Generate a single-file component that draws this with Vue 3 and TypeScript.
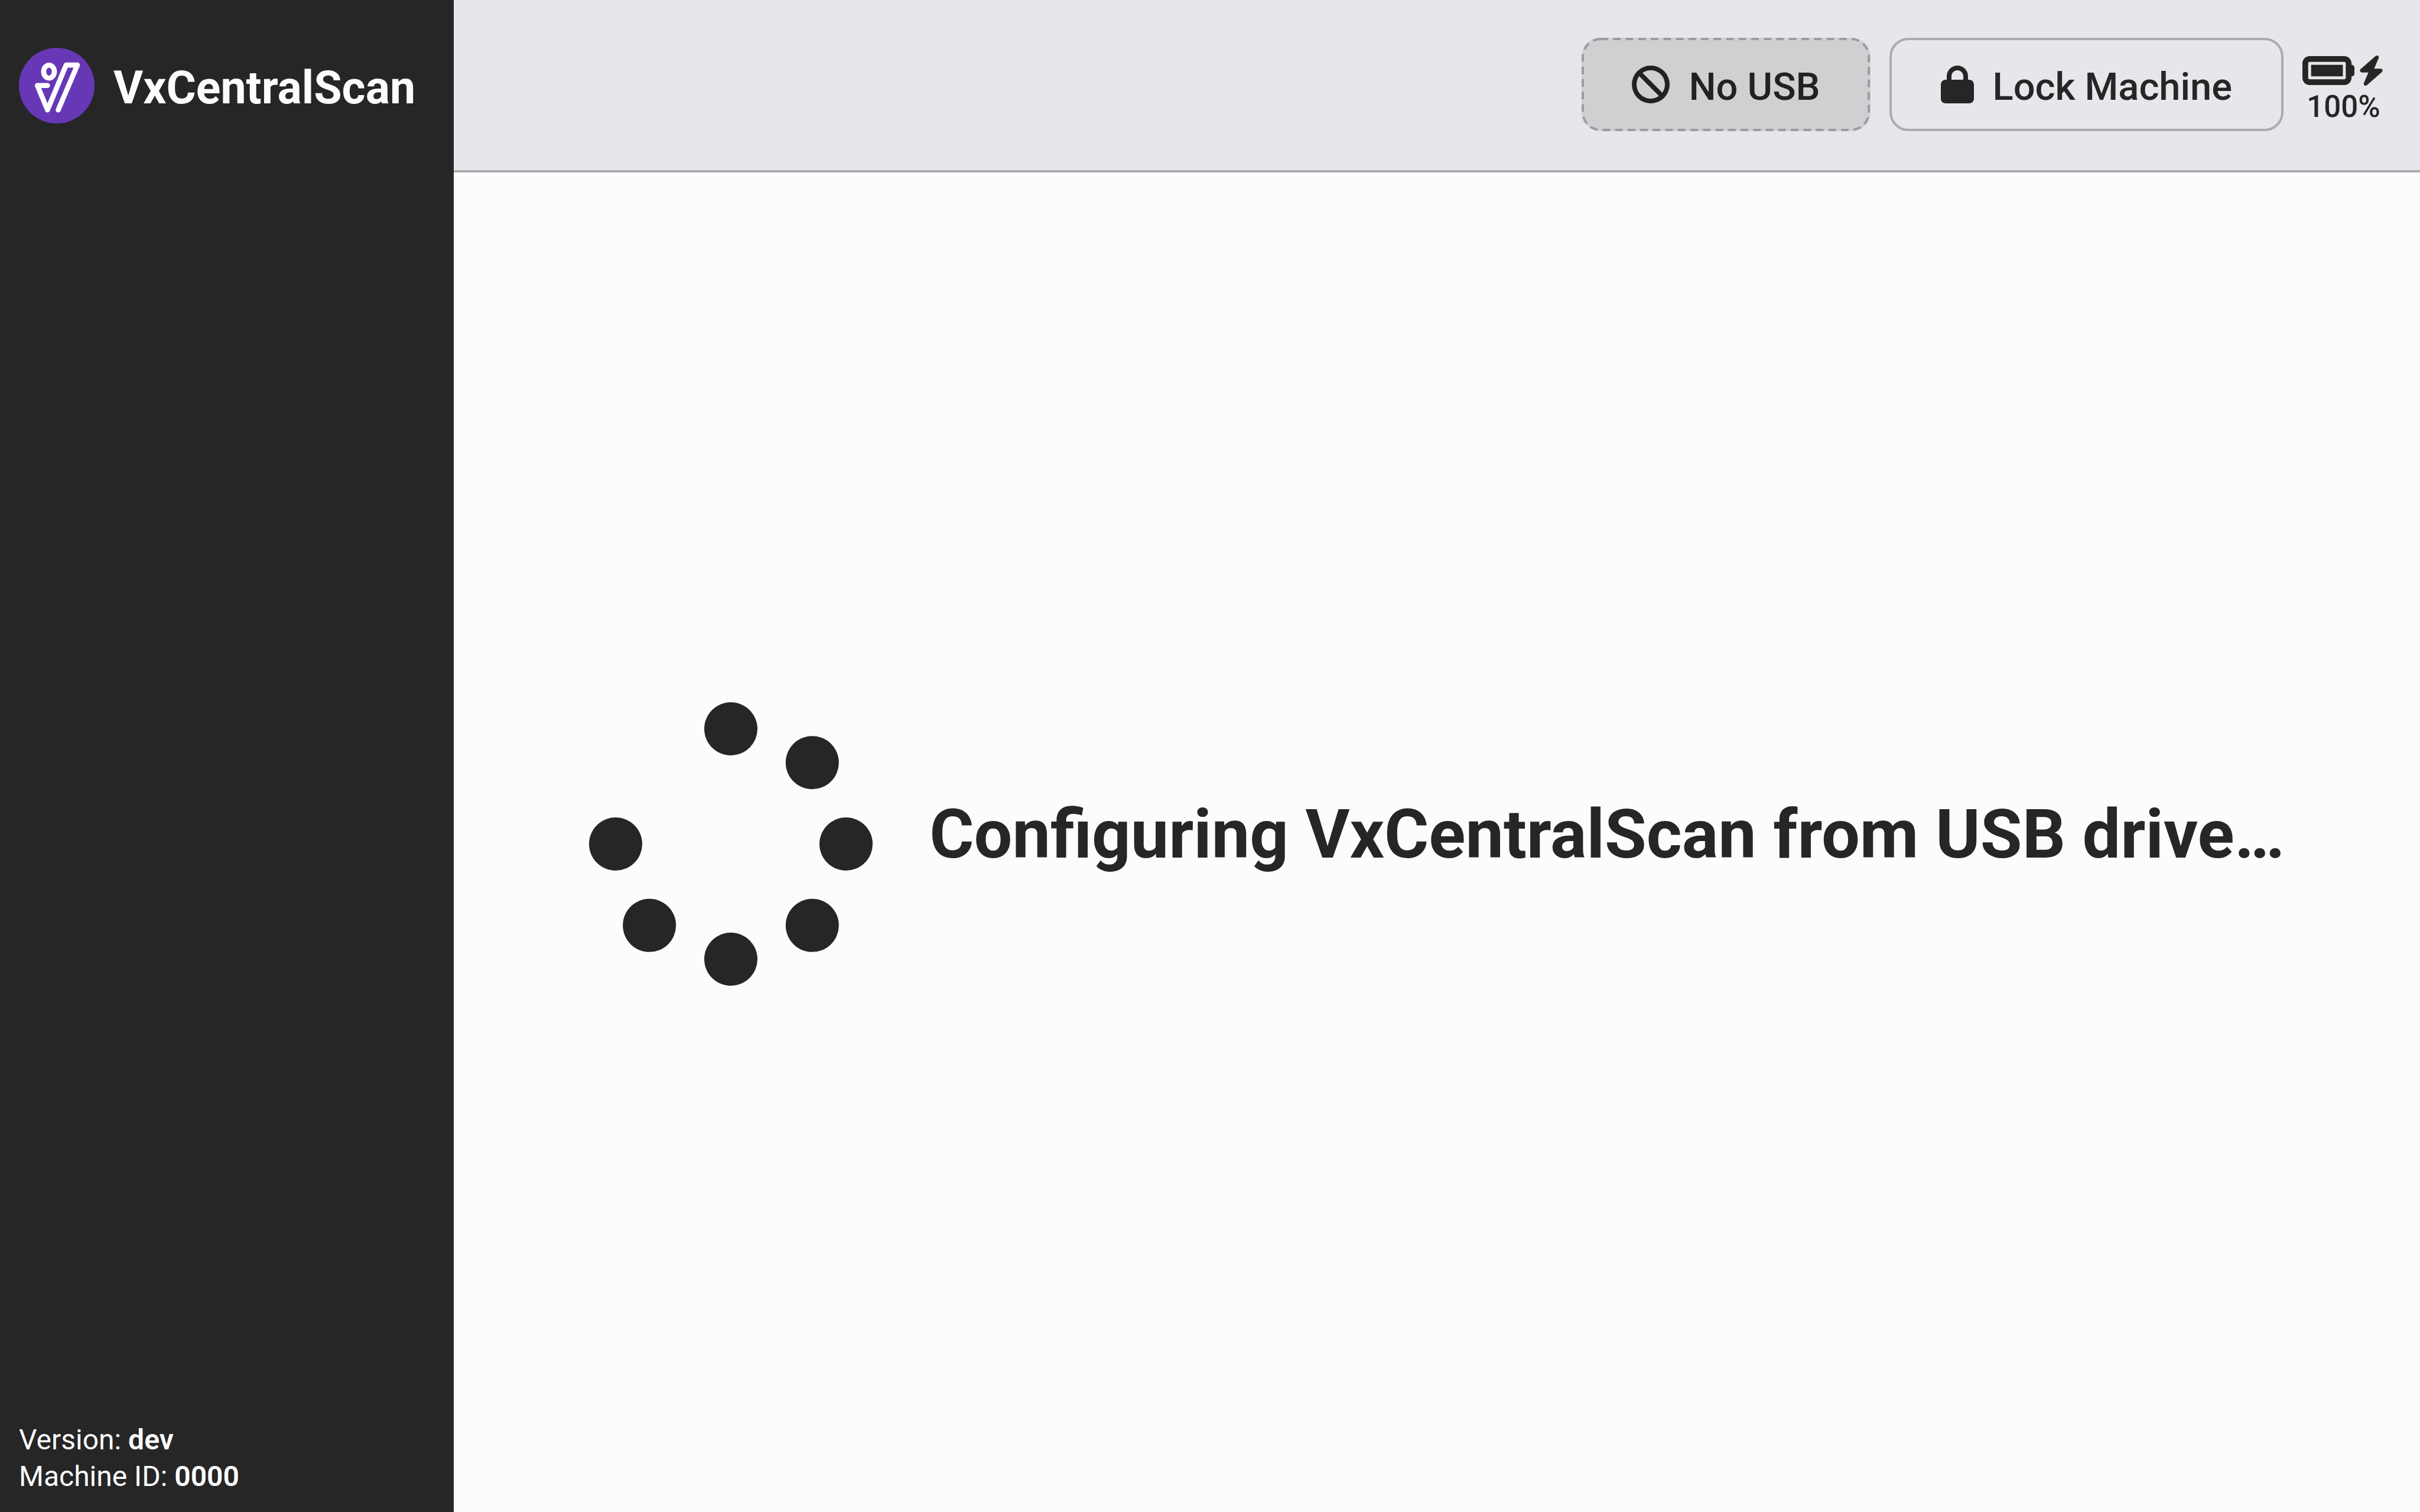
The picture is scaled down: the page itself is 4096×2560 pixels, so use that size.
<script setup lang="ts">
import { ref } from 'vue'

const appName = ref<string>('VxCentralScan')
const version = ref<string>('dev')
const machineId = ref<string>('0000')
const batteryLevel = ref<number>(100)

interface Dot {
  cx: number
  cy: number
}

// Seven of eight positions on the ring; the upper-left one stays empty.
const dots: Dot[] = [
  { cx: 256, cy: 48 },
  { cx: 403, cy: 109 },
  { cx: 464, cy: 256 },
  { cx: 403, cy: 403 },
  { cx: 256, cy: 464 },
  { cx: 109, cy: 403 },
  { cx: 48, cy: 256 },
]
</script>

<template>
  <div class="screen">
    <aside class="sidebar">
      <div class="brand">
        <svg class="logo" viewBox="0 0 402 402" aria-hidden="true">
          <circle cx="201" cy="201" r="201" fill="#6638b6" />
          <g fill="none" stroke="#fff" stroke-width="27" stroke-linecap="round" stroke-linejoin="round">
            <ellipse cx="160" cy="126.500" rx="28.500" ry="34.500" />
            <path d="M152 200H98L152 330L251 91.500H311L209 330" />
          </g>
        </svg>
        <span class="name">{{ appName }}</span>
      </div>
      <div class="info">
        <div>Version: <strong>{{ version }}</strong></div>
        <div>Machine ID: <strong>{{ machineId }}</strong></div>
      </div>
    </aside>

    <div class="content">
      <header class="toolbar">
        <button class="btn usb" type="button" disabled>
          <svg class="outline" aria-hidden="true">
            <rect x="2" y="2" rx="30" />
          </svg>
          <svg class="icon" viewBox="0 0 512 512" aria-hidden="true">
            <path d="M367.200 412.500L99.500 144.800C77.100 176.100 64 214.500 64 256c0 106 86 192 192 192c41.500 0 79.900-13.100 111.200-35.500zm45.300-45.300C434.900 335.900 448 297.500 448 256c0-106-86-192-192-192c-41.500 0-79.900 13.100-111.200 35.500L412.500 367.200zM0 256a256 256 0 1 1 512 0A256 256 0 1 1 0 256z" />
          </svg>
          <span>No USB</span>
        </button>
        <button class="btn lock" type="button">
          <svg class="icon narrow" viewBox="0 0 448 512" aria-hidden="true">
            <path d="M144 144v48H304V144c0-44.200-35.800-80-80-80s-80 35.800-80 80zM80 192V144C80 64.500 144.500 0 224 0s144 64.500 144 144v48h16c35.300 0 64 28.700 64 64V448c0 35.300-28.700 64-64 64H64c-35.300 0-64-28.700-64-64V256c0-35.300 28.700-64 64-64H80z" />
          </svg>
          <span>Lock Machine</span>
        </button>
        <div class="battery">
          <div class="battery-icons">
            <svg class="cell" viewBox="0 96 576 320" aria-hidden="true">
              <path d="M464 160c8.800 0 16 7.200 16 16V336c0 8.800-7.200 16-16 16H80c-8.800 0-16-7.200-16-16V176c0-8.800 7.200-16 16-16H464zM80 96C35.800 96 0 131.800 0 176V336c0 44.200 35.800 80 80 80H464c44.200 0 80-35.800 80-80V320c17.700 0 32-14.300 32-32V224c0-17.700-14.300-32-32-32V176c0-44.200-35.800-80-80-80H80zm368 96H96V320H448V192z" />
            </svg>
            <svg class="bolt" viewBox="0 0 448 512" aria-hidden="true">
              <path d="M349.400 44.600c5.900-13.700 1.500-29.700-10.600-38.500s-28.600-8-39.900 1.800l-256 224c-10 8.800-13.600 22.900-8.900 35.300S50.700 288 64 288H175.500L98.600 467.400c-5.900 13.700-1.500 29.700 10.600 38.500s28.600 8 39.900-1.800l256-224c10-8.800 13.600-22.900 8.900-35.300s-16.600-20.700-30-20.700H272.500L349.400 44.600z" />
            </svg>
          </div>
          <span class="level">{{ batteryLevel }}%</span>
        </div>
      </header>

      <main class="stage">
        <svg class="spinner" viewBox="0 0 512 512" aria-hidden="true">
          <circle v-for="(dot, i) in dots" :key="i" :cx="dot.cx" :cy="dot.cy" r="48" />
        </svg>
        <h1 class="message">Configuring {{ appName }} from USB drive…</h1>
      </main>
    </div>
  </div>
</template>

<style>
body {
  margin: 0;
  background: #fcfcfc;
}
</style>

<style scoped>
.screen {
  display: flex;
  min-height: 100vh;
  font-family: Roboto, "Noto Sans", sans-serif;
  color: #262626;
}

svg {
  display: block;
  flex: none;
  fill: currentColor;
}

.sidebar {
  box-sizing: border-box;
  flex: none;
  width: 768px;
  padding: 81px 32px 29px;
  display: flex;
  flex-direction: column;
  justify-content: space-between;
  background: #262626;
  color: #fcfcfc;
}

.brand {
  display: flex;
  align-items: center;
  gap: 32px;
}

.logo {
  width: 128px;
  height: 128px;
}

.name {
  padding-top: 8px;
  font-size: 77px;
  line-height: 92px;
  font-weight: 700;
}

.info {
  font-size: 48px;
  line-height: 62px;
}

.info strong {
  font-weight: 600;
}

.content {
  flex: 1;
  display: flex;
  flex-direction: column;
  background: #fcfcfc;
}

.toolbar {
  display: flex;
  justify-content: flex-end;
  align-items: flex-start;
  gap: 32px;
  padding: 64px 60px 66px 64px;
  border-bottom: 4px solid #acabb0;
  background: #e6e6eb;
}

.btn {
  position: relative;
  box-sizing: border-box;
  display: flex;
  align-items: center;
  gap: 32px;
  height: 158px;
  margin: 0;
  padding: 0 83px;
  border: 4px solid #acabb0;
  border-radius: 32px;
  background: transparent;
  color: #262626;
  font-family: inherit;
  font-size: 65px;
  line-height: 76px;
  font-weight: 500;
}

.usb {
  padding: 0 81px;
  border-color: transparent;
  background: #d0d0d2;
  color: #222222;
}

.outline {
  position: absolute;
  top: -4px;
  left: -4px;
  width: calc(100% + 8px);
  height: calc(100% + 8px);
}

.outline rect {
  width: calc(100% - 4px);
  height: calc(100% - 4px);
  fill: none;
  stroke: #9c9c9e;
  stroke-width: 4px;
  stroke-dasharray: 13 8.250;
}

.btn span {
  padding-top: 8px;
}

.icon {
  width: 64px;
  height: 64px;
}

.narrow {
  width: 56px;
}

.battery {
  display: flex;
  flex-direction: column;
  align-items: center;
  gap: 5px;
  padding-top: 30px;
}

.battery-icons {
  display: flex;
  align-items: center;
  gap: 6px;
}

.cell {
  width: 88px;
  height: 49px;
}

.bolt {
  width: 45px;
  height: 51px;
}

.level {
  font-size: 51px;
  line-height: 61px;
  font-weight: 500;
}

.stage {
  flex: 1;
  display: flex;
  align-items: center;
  justify-content: center;
  gap: 96px;
  padding-top: 6px;
}

.spinner {
  width: 480px;
  height: 480px;
}

.message {
  margin: 0;
  padding-bottom: 32px;
  font-size: 115px;
  line-height: 138px;
  font-weight: 700;
  white-space: nowrap;
}
</style>
